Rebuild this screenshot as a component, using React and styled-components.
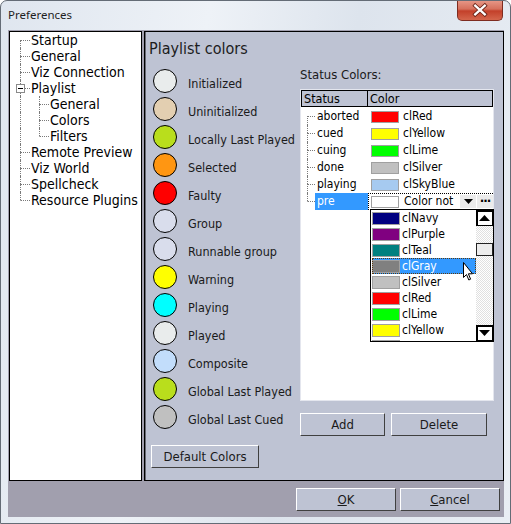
import React from "react";
import styled, { createGlobalStyle } from "styled-components";

const UI = `"DejaVu Sans Condensed", "DejaVu Sans", sans-serif`;
const LINE = "#7a7a7a";

const GlobalStyle = createGlobalStyle`
  html, body {
    margin: 0;
    padding: 0;
    background: #ffffff;
  }
  body {
    font-family: ${UI};
  }
`;

const treeItems = [
  { label: "Startup", depth: 0 },
  { label: "General", depth: 0 },
  { label: "Viz Connection", depth: 0 },
  { label: "Playlist", depth: 0, open: true },
  { label: "General", depth: 1 },
  { label: "Colors", depth: 1 },
  { label: "Filters", depth: 1, last: true },
  { label: "Remote Preview", depth: 0 },
  { label: "Viz World", depth: 0 },
  { label: "Spellcheck", depth: 0 },
  { label: "Resource Plugins", depth: 0, last: true },
];

const playlistColors = [
  { label: "Initialized", color: "#e9ecec" },
  { label: "Uninitialized", color: "#e3cfb1" },
  { label: "Locally Last Played", color: "#b9de1c" },
  { label: "Selected", color: "#ff9612" },
  { label: "Faulty", color: "#ff0000" },
  { label: "Group", color: "#d9ddec" },
  { label: "Runnable group", color: "#d9ddec" },
  { label: "Warning", color: "#ffff00" },
  { label: "Playing", color: "#00ffff" },
  { label: "Played", color: "#e9ecec" },
  { label: "Composite", color: "#c2ddfb" },
  { label: "Global Last Played", color: "#b9de1c" },
  { label: "Global Last Cued", color: "#c0c0c0" },
];

const statusRows = [
  { name: "aborted", color: "#ff0000", label: "clRed" },
  { name: "cued", color: "#ffff00", label: "clYellow" },
  { name: "cuing", color: "#00ff00", label: "clLime" },
  { name: "done", color: "#c0c0c0", label: "clSilver" },
  { name: "playing", color: "#a6caf0", label: "clSkyBlue" },
];

// the last entry is scrolled half out of view, only its swatch top shows
const dropColors = [
  { label: "clNavy", color: "#000080" },
  { label: "clPurple", color: "#800080" },
  { label: "clTeal", color: "#008080" },
  { label: "clGray", color: "#808080", selected: true },
  { label: "clSilver", color: "#c0c0c0" },
  { label: "clRed", color: "#ff0000" },
  { label: "clLime", color: "#00ff00" },
  { label: "clYellow", color: "#ffff00" },
  { label: "", color: "#0000ff" },
];

export default function App() {
  return (
    <>
      <GlobalStyle />
      <Window>
        <TitleBar>
          <Title>Preferences</Title>
          <CloseButton>
            <svg width="46" height="20" viewBox="0 0 46 20">
              <path d="M18 5.5 L28 14.5 M28 5.5 L18 14.5" stroke="#6b2418" strokeWidth="4.2" strokeLinecap="square" />
              <path d="M18 5.5 L28 14.5 M28 5.5 L18 14.5" stroke="#ffffff" strokeWidth="2.4" strokeLinecap="square" />
            </svg>
          </CloseButton>
        </TitleBar>
        <Client>
          <TopRow>
            <Tree>
              {treeItems.map((item, i) => (
                <TreeRow key={i}>
                  <Spacer $w={10} />
                  {item.depth === 1 && <PassLine />}
                  <Guide $w={10}>
                    <GuideHalf $v={i !== 0} />
                    <GuideHalf $v={!item.last} $h />
                    {item.open && <MinusBox />}
                  </Guide>
                  <TreeText>{item.label}</TreeText>
                </TreeRow>
              ))}
            </Tree>
            <Panel>
              <Heading>Playlist colors</Heading>
              <PanelBody>
                <ColorColumn>
                  {playlistColors.map((c) => (
                    <ColorRow key={c.label}>
                      <Circle $color={c.color} />
                      <ColorLabel>{c.label}</ColorLabel>
                    </ColorRow>
                  ))}
                  <DefaultButton $w={108}>Default Colors</DefaultButton>
                </ColorColumn>
                <StatusColumn>
                  <StatusLabel>Status Colors:</StatusLabel>
                  <Grid>
                    <GridHeader>
                      <HeadCell $w={67}>Status</HeadCell>
                      <HeadCell>Color</HeadCell>
                    </GridHeader>
                    <GridBody>
                      {statusRows.map((r, i) => (
                        <GridRow key={r.name}>
                          <Spacer $w={6} />
                          <Guide $w={8}>
                            <GuideHalf $v={i !== 0} />
                            <GuideHalf $v $h />
                          </Guide>
                          <NameCell>{r.name}</NameCell>
                          <ColorCell>
                            <Swatch $color={r.color} />
                            <CellText>{r.label}</CellText>
                          </ColorCell>
                        </GridRow>
                      ))}
                      <GridRow>
                        <Spacer $w={6} />
                        <Guide $w={8}>
                          <GuideHalf $v />
                          <GuideHalf $h />
                        </Guide>
                        <NameCell $selected>pre</NameCell>
                        <EditorCell>
                          <Swatch $color="#ffffff" />
                          <CellText>Color not</CellText>
                          <EditButton>
                            <svg width="9" height="5" viewBox="0 0 9 5">
                              <path d="M0 0 H9 L4.5 5 Z" fill="#000" />
                            </svg>
                          </EditButton>
                          <EditButton>
                            <Dots>···</Dots>
                          </EditButton>
                        </EditorCell>
                      </GridRow>
                    </GridBody>
                    <DropList>
                      <DropItems>
                        {dropColors.map((c, i) => (
                          <DropItem key={i} $selected={c.selected}>
                            <DropSwatch $color={c.color} />
                            {c.label && <span>{c.label}</span>}
                          </DropItem>
                        ))}
                      </DropItems>
                      <ScrollBar>
                        <ScrollButton>
                          <svg width="11" height="6" viewBox="0 0 11 6">
                            <path d="M0 6 H11 L5.5 0 Z" fill="#000" />
                          </svg>
                        </ScrollButton>
                        <Thumb />
                        <ScrollFill />
                        <ScrollButton>
                          <svg width="11" height="6" viewBox="0 0 11 6">
                            <path d="M0 0 H11 L5.5 6 Z" fill="#000" />
                          </svg>
                        </ScrollButton>
                      </ScrollBar>
                      <Cursor width="10" height="19" viewBox="0 0 10 19">
                        <path
                          d="M0.5 0.5 L0.5 15.5 L3.5 12.5 L5.8 18 L7.6 17.2 L5.4 11.8 L9.5 11.8 Z"
                          fill="#fff"
                          stroke="#000"
                          strokeWidth="1"
                        />
                      </Cursor>
                    </DropList>
                  </Grid>
                  <ButtonRow>
                    <Button $w={85}>Add</Button>
                    <Button $w={96}>Delete</Button>
                  </ButtonRow>
                </StatusColumn>
              </PanelBody>
            </Panel>
          </TopRow>
          <BottomBar>
            <Button $w={100}>
              <u>O</u>K
            </Button>
            <Button $w={100}>
              <u>C</u>ancel
            </Button>
          </BottomBar>
        </Client>
      </Window>
    </>
  );
}

const Window = styled.div`
  width: 511px;
  height: 524px;
  box-sizing: border-box;
  border: 1px solid #646c76;
  border-radius: 7px 7px 0 0;
  background: linear-gradient(100deg, #dfe6ef 0%, #eef2f7 35%, #dde4ed 60%, #e9eef4 100%);
  display: flex;
  flex-direction: column;
  overflow: hidden;
`;

const TitleBar = styled.div`
  height: 29px;
  flex: none;
  display: flex;
  align-items: flex-start;
`;

const Title = styled.div`
  padding: 6px 0 0 7px;
  font: 11.5px/16px "Noto Sans", "Open Sans", sans-serif;
  color: #1e1e1e;
`;

const CloseButton = styled.div`
  margin: -1px 7px 0 auto;
  width: 46px;
  height: 21px;
  box-sizing: border-box;
  border: 1px solid #7e2c20;
  border-top: none;
  border-radius: 0 0 5px 5px;
  background: linear-gradient(#e89a8a 0%, #d5705c 45%, #c3402a 55%, #d4664c 100%);
  display: flex;
  svg {
    display: block;
  }
`;

const Client = styled.div`
  margin-left: 7px;
  width: 496px;
  height: 487px;
  flex: none;
  box-sizing: border-box;
  padding: 1px 0 0 1px;
  background: #a19fae;
  display: flex;
  flex-direction: column;
`;

const TopRow = styled.div`
  display: flex;
  gap: 2px;
  height: 450px;
  flex: none;
`;

const Tree = styled.div`
  width: 133px;
  box-sizing: border-box;
  border: 1px solid #000;
  background: #fff;
  display: flex;
  flex-direction: column;
`;

const TreeRow = styled.div`
  display: flex;
  height: 16px;
`;

const Spacer = styled.div`
  flex: none;
  width: ${(p) => p.$w}px;
`;

const PassLine = styled.div`
  flex: none;
  width: 19px;
  box-sizing: border-box;
  border-left: 1px dotted ${LINE};
`;

const Guide = styled.div`
  flex: none;
  width: ${(p) => p.$w}px;
  display: flex;
  flex-direction: column;
  position: relative;
`;

const GuideHalf = styled.div`
  flex: 1;
  box-sizing: border-box;
  border-left: 1px dotted ${(p) => (p.$v ? LINE : "transparent")};
  border-top: ${(p) => (p.$h ? `1px dotted ${LINE}` : "none")};
`;

const MinusBox = styled.div`
  position: absolute;
  left: -4px;
  top: 4px;
  width: 9px;
  height: 9px;
  box-sizing: border-box;
  border: 1px solid #8a8a8a;
  background: #fff;
  &::after {
    content: "";
    position: absolute;
    left: 1px;
    top: 3px;
    width: 5px;
    height: 1px;
    background: #000;
  }
`;

const TreeText = styled.div`
  margin-left: 1px;
  font-size: 14px;
  line-height: 16px;
  color: #000;
  white-space: nowrap;
`;

const Panel = styled.div`
  width: 360px;
  box-sizing: border-box;
  border: 1px solid #000;
  box-shadow: inset 1px 0 0 #6a6a74;
  background: #bec3d3;
  display: flex;
  flex-direction: column;
`;

const Heading = styled.div`
  margin: 7px 0 0 4px;
  font-size: 16px;
  line-height: 20px;
  color: #1c1c1c;
`;

const PanelBody = styled.div`
  margin-top: 8px;
  display: flex;
`;

const ColorColumn = styled.div`
  width: 155px;
  flex: none;
  display: flex;
  flex-direction: column;
  align-items: flex-start;
`;

const ColorRow = styled.div`
  height: 28px;
  display: flex;
  align-items: center;
  padding-left: 8px;
`;

const Circle = styled.div`
  width: 24px;
  height: 24px;
  box-sizing: border-box;
  border: 1px solid #000;
  border-radius: 50%;
  background: ${(p) => p.$color};
`;

const ColorLabel = styled.div`
  margin-left: 11px;
  padding-top: 4px;
  font-size: 12.5px;
  color: #1a1a1a;
  white-space: nowrap;
`;

const StatusColumn = styled.div`
  width: 194px;
  display: flex;
  flex-direction: column;
`;

const StatusLabel = styled.div`
  font-size: 13px;
  line-height: 16px;
  margin-bottom: 6px;
  color: #1a1a1a;
`;

const Grid = styled.div`
  position: relative;
  height: 312px;
  box-sizing: border-box;
  border: 1px solid #e4e6ee;
  background: #fff;
  display: flex;
  flex-direction: column;
`;

const GridHeader = styled.div`
  height: 17px;
  flex: none;
  box-sizing: border-box;
  border: 1px solid #000;
  background: #bec3d3;
  display: flex;
`;

const HeadCell = styled.div`
  box-sizing: border-box;
  ${(p) => (p.$w ? `width: ${p.$w - 1}px; border-right: 1px solid #000;` : "flex: 1;")}
  padding-left: 2px;
  font-size: 12.5px;
  line-height: 15px;
  color: #000;
`;

const GridBody = styled.div`
  padding-top: 1px;
  display: flex;
  flex-direction: column;
`;

const GridRow = styled.div`
  height: 17px;
  display: flex;
`;

const NameCell = styled.div`
  width: 53px;
  flex: none;
  box-sizing: border-box;
  padding-left: 2px;
  font-size: 12px;
  line-height: 17px;
  color: ${(p) => (p.$selected ? "#fff" : "#000")};
  background: ${(p) => (p.$selected ? "#3399ff" : "transparent")};
`;

const ColorCell = styled.div`
  flex: 1;
  min-width: 0;
  display: flex;
  align-items: center;
  padding-left: 3px;
`;

const EditorCell = styled.div`
  flex: 1;
  min-width: 0;
  box-sizing: border-box;
  display: flex;
  align-items: center;
  padding-left: 2px;
  border: 1px dotted #000;
  border-right: none;
  gap: 1px;
`;

const Swatch = styled.div`
  width: 28px;
  height: 12px;
  flex: none;
  box-sizing: border-box;
  border: 1px solid #a0a0a0;
  background: ${(p) => p.$color};
`;

const CellText = styled.div`
  flex: 1;
  min-width: 0;
  margin-left: 4px;
  font-size: 12px;
  line-height: 15px;
  color: #000;
  white-space: nowrap;
  overflow: hidden;
`;

const EditButton = styled.div`
  width: 16px;
  height: 13px;
  flex: none;
  background: #ebebeb;
  display: flex;
  align-items: center;
  justify-content: center;
`;

const Dots = styled.span`
  font: bold 12px/10px "DejaVu Sans", sans-serif;
  letter-spacing: -1px;
  margin-top: -2px;
`;

const DropList = styled.div`
  position: absolute;
  left: 69px;
  top: 119px;
  width: 124px;
  height: 133px;
  box-sizing: border-box;
  border: 1px solid #000;
  background: #fff;
  display: flex;
`;

const DropItems = styled.div`
  flex: 1;
  display: flex;
  flex-direction: column;
  overflow: hidden;
`;

const DropItem = styled.div`
  height: 16px;
  flex: none;
  margin-left: 1px;
  display: flex;
  align-items: center;
  font-size: 12px;
  color: ${(p) => (p.$selected ? "#fff" : "#000")};
  background: ${(p) => (p.$selected ? "#3399ff" : "transparent")};
  outline: ${(p) => (p.$selected ? "1px dotted #5a3a10" : "none")};
  outline-offset: -1px;
  span {
    margin-left: 2px;
  }
`;

const DropSwatch = styled.div`
  width: 28px;
  height: 13px;
  flex: none;
  box-sizing: border-box;
  border: 1px solid #a0a0a0;
  background: ${(p) => p.$color};
`;

const ScrollBar = styled.div`
  width: 17px;
  flex: none;
  display: flex;
  flex-direction: column;
  background: repeating-conic-gradient(#ffffff 0 25%, #e0e0e0 0 50%) 0 0 / 2px 2px;
`;

const ScrollButton = styled.div`
  height: 16px;
  flex: none;
  box-sizing: border-box;
  border: 1px solid #000;
  box-shadow: inset 1px 1px 0 #000;
  background: #fff;
  display: flex;
  align-items: center;
  justify-content: center;
`;

const Thumb = styled.div`
  margin-top: 17px;
  height: 13px;
  flex: none;
  box-sizing: border-box;
  border: 1px solid #222;
  background: #ececec;
`;

const ScrollFill = styled.div`
  flex: 1;
`;

const Cursor = styled.svg`
  position: absolute;
  left: 92px;
  top: 52px;
`;

const ButtonRow = styled.div`
  margin-top: 12px;
  display: flex;
  gap: 6px;
`;

const Button = styled.button`
  width: ${(p) => p.$w}px;
  height: 23px;
  flex: none;
  box-sizing: border-box;
  padding: 0;
  background: #bec3d3;
  border: 1px solid;
  border-color: #ffffff #404040 #404040 #ffffff;
  font: 13px ${UI};
  color: #1a1a1a;
  cursor: default;
`;

const DefaultButton = styled(Button)`
  margin: 14px 0 0 6px;
`;

const BottomBar = styled.div`
  flex: 1;
  display: flex;
  justify-content: flex-end;
  align-items: flex-start;
  gap: 4px;
  padding: 7px 4px 0 0;
`;
